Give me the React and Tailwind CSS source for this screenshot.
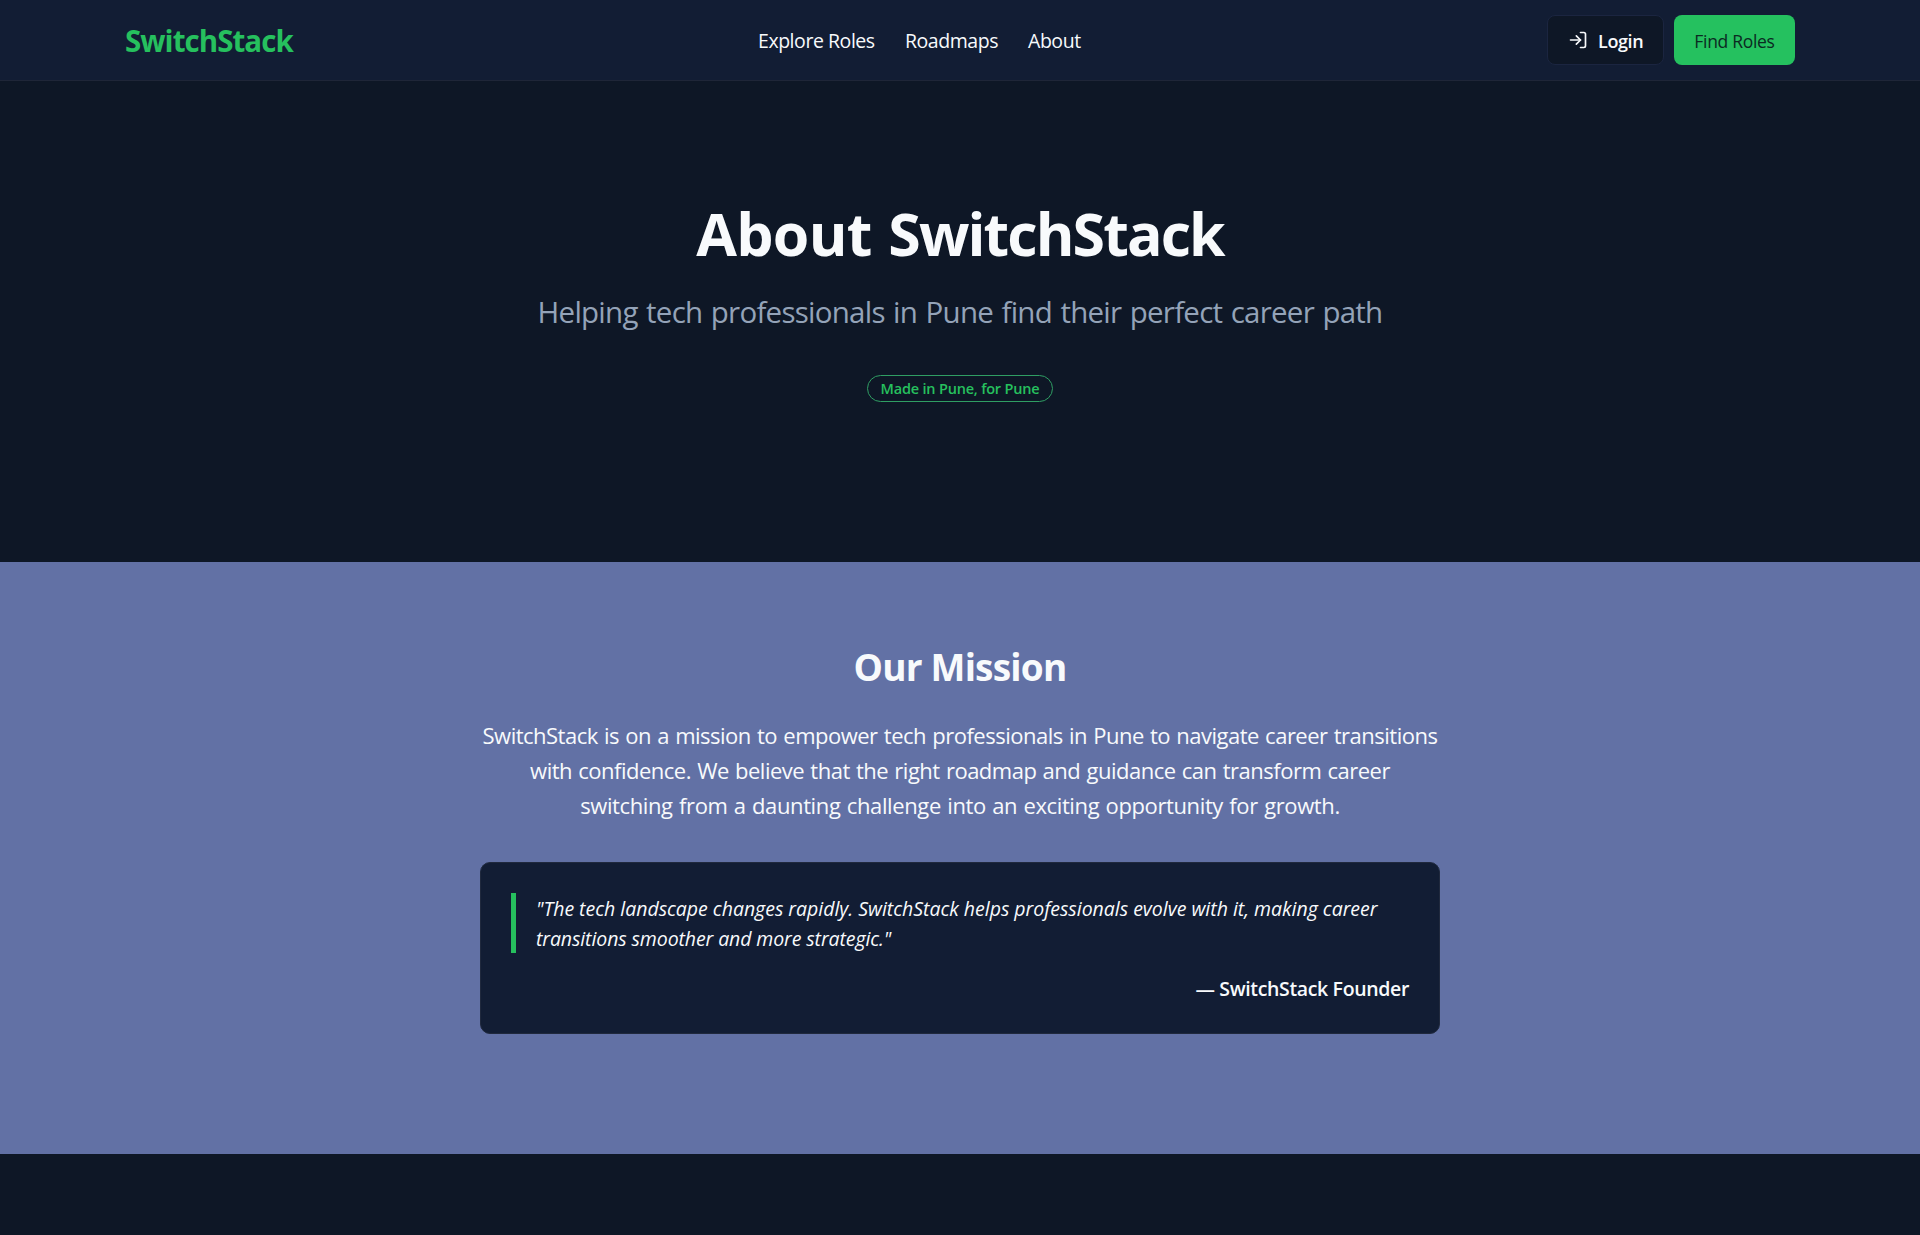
import { LogIn } from "lucide-react";

const navLinks = [
  { label: "Explore Roles", width: "w-[117px]" },
  { label: "Roadmaps", width: "w-[93px]" },
  { label: "About", width: "w-[55px]" },
];

function Header() {
  return (
    <header className="h-[81px] border-b border-[#1f2638] bg-[#121d34]">
      <div className="mx-[125px] flex h-20 items-center justify-between">
        <a href="#" className="w-[169px] whitespace-nowrap pt-0.5 text-[29.5px] font-bold leading-10 tracking-[-0.95px] text-[#26c05e]">
          SwitchStack
        </a>
        <nav className="flex gap-[30px] pt-0.5 text-[19.5px] leading-[30px]">
          {navLinks.map((link) => (
            <a key={link.label} href="#" className={`${link.width} whitespace-nowrap tracking-[-0.45px]`}>
              {link.label}
            </a>
          ))}
        </nav>
        <div className="flex gap-2.5">
          <button className="flex h-[50px] w-[117px] items-center rounded-lg border border-[#1b2540] bg-[#0e1726] pl-5 text-[18px] font-semibold">
            <LogIn size={20} strokeWidth={2} className="mr-2.5 shrink-0" />
            <span className="whitespace-nowrap pt-0.5 tracking-[-0.4px]">Login</span>
          </button>
          <button className="h-[50px] w-[121px] whitespace-nowrap rounded-lg bg-[#25c15f] pt-[3px] text-[17.5px] tracking-[-0.3px] text-[#0b2a22]">
            Find Roles
          </button>
        </div>
      </div>
    </header>
  );
}

function Hero() {
  return (
    <section className="flex h-[481px] flex-col items-center pt-[117px]">
      <h1 className="whitespace-nowrap text-[59px] font-bold leading-[70px] tracking-[-1.9px] [word-spacing:2px]">
        <span className="tracking-[-0.7px]">About </span>
        SwitchStack
      </h1>
      <p className="mt-6 whitespace-nowrap text-[29.5px] leading-10 tracking-[-0.75px] text-[#94a3b8] [word-spacing:1.5px]">
        Helping tech professionals in Pune find their perfect career path
      </p>
      <div className="mt-[43px] flex h-[27px] w-[186px] items-center justify-center rounded-full border border-[#2f9e63] text-[14.5px] font-semibold tracking-[-0.2px] text-[#26c05e]">
        <span className="whitespace-nowrap">Made in Pune, for Pune</span>
      </div>
    </section>
  );
}

function Mission() {
  return (
    <section className="flex h-[592px] flex-col items-center bg-[#6271a5] pt-20">
      <h2 className="whitespace-nowrap text-[37px] font-bold leading-[50px] tracking-[-0.8px]">Our Mission</h2>
      <p className="mt-[26px] whitespace-nowrap text-center text-[22px] leading-[35px] tracking-[-0.5px] [word-spacing:1px]">
        SwitchStack is on a mission to empower tech professionals in Pune to navigate career transitions
        <br />
        with confidence. We believe that the right roadmap and guidance can transform career
        <br />
        <span className="tracking-[-0.38px]">
          switching from a daunting challenge into an exciting opportunity for growth.
        </span>
      </p>
      <div className="mt-[39px] h-[172px] w-[960px] rounded-[10px] border border-[#20293d] bg-[#121d34] p-[30px]">
        <blockquote className="border-l-[5px] border-[#26c05e] pl-5">
          <p className="relative top-px whitespace-nowrap text-[19.5px] italic leading-[30px] tracking-[-0.02px]">
            "The tech landscape changes rapidly. SwitchStack helps professionals evolve with it, making career
            <br />
            <span className="tracking-[-0.1px]">transitions smoother and more strategic."</span>
          </p>
        </blockquote>
        <p className="mt-[21px] whitespace-nowrap text-right text-[19.5px] font-semibold leading-[30px] tracking-[-0.35px]">
          — SwitchStack Founder
        </p>
      </div>
    </section>
  );
}

export default function App() {
  return (
    <div className="h-[1235px] overflow-hidden bg-[#0e1726] font-['Open_Sans','Noto_Sans',sans-serif] text-[#f8fafc]">
      <Header />
      <Hero />
      <Mission />
    </div>
  );
}
